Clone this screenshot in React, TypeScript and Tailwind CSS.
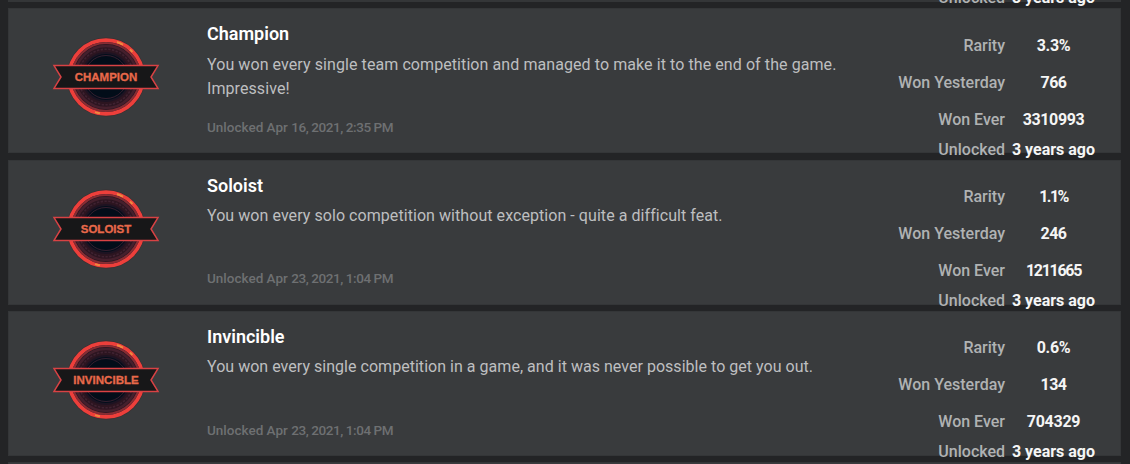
type Badge = {
  title: string;
  ribbon: string;
  ribbonWidth: number;
  lines: string[];
  lineTracking: string;
  date: string;
  dateTracking: string;
  rarity: string;
  rarityTracking: string;
  yesterday: string;
  ever: string;
  everTracking: string;
};

const badges: Badge[] = [
  {
    title: 'Champion',
    ribbon: 'CHAMPION',
    ribbonWidth: 62.5,
    lines: [
      'You won every single team competition and managed to make it to the end of the game.',
      'Impressive!',
    ],
    lineTracking: 'tracking-[0.08px]',
    date: '16, 2021, 2:35 PM',
    dateTracking: 'tracking-[-0.42px]',
    rarity: '3.3%',
    rarityTracking: 'tracking-[-0.3px]',
    yesterday: '766',
    ever: '3310993',
    everTracking: 'tracking-[-0.4px]',
  },
  {
    title: 'Soloist',
    ribbon: 'SOLOIST',
    ribbonWidth: 50.5,
    lines: ['You won every solo competition without exception - quite a difficult feat.'],
    lineTracking: 'tracking-[0.06px]',
    date: '23, 2021, 1:04 PM',
    dateTracking: 'tracking-[-0.42px]',
    rarity: '1.1%',
    rarityTracking: 'tracking-[-1.6px]',
    yesterday: '246',
    ever: '1211665',
    everTracking: 'tracking-[-1.3px]',
  },
  {
    title: 'Invincible',
    ribbon: 'INVINCIBLE',
    ribbonWidth: 65.5,
    lines: ['You won every single competition in a game, and it was never possible to get you out.'],
    lineTracking: 'tracking-[0.03px]',
    date: '23, 2021, 1:04 PM',
    dateTracking: 'tracking-[-0.42px]',
    rarity: '0.6%',
    rarityTracking: 'tracking-[-0.3px]',
    yesterday: '134',
    ever: '704329',
    everTracking: 'tracking-[-0.3px]',
  },
];

function Medal({ label, width }: { label: string; width: number }) {
  return (
    <svg width="110" height="84" viewBox="0 0 110 84" className="block">
      <circle cx="55" cy="42" r="39.5" fill="#3a3032" />
      <circle cx="55" cy="42" r="36.9" fill="#2c1520" stroke="#ed3f3b" strokeWidth="3.8" />
      <circle cx="55" cy="42" r="34" fill="none" stroke="#872d34" strokeWidth="2.2" />
      <circle cx="55" cy="42" r="31" fill="none" stroke="#45202d" strokeWidth="2.6" />
      <circle cx="55" cy="42" r="27.8" fill="none" stroke="#3f2231" strokeWidth="1.6" strokeDasharray="2.4 1.4" />
      <circle cx="55" cy="42" r="24" fill="#030e1b" stroke="#1d1322" strokeWidth="2" />
      <circle cx="55" cy="42" r="21.5" fill="#020d19" stroke="#422334" strokeWidth="0.8" />
      <path d="M66 7 A36.8 36.8 0 0 1 72 9.6 M79 14.6 A36.8 36.8 0 0 1 81.5 17 M91.3 49 A36.8 36.8 0 0 1 90 53.5 M44 77.1 A36.8 36.8 0 0 0 49 78.3" fill="none" stroke="#ee8a3e" strokeWidth="2" />
      <path d="M3 30.6 H107 L100 42 L107 53.4 H3 L10 42 Z" fill="#171718" stroke="#d84244" strokeWidth="1.5" />
      <text
        x="55"
        y="45.6"
        textAnchor="middle"
        textLength={width}
        lengthAdjust="spacingAndGlyphs"
        fill="#e8694a"
        stroke="#e8694a"
        strokeWidth="0.3"
        fontFamily="Liberation Sans, sans-serif"
        fontWeight="700"
        fontSize="11.2"
      >
        {label}
      </text>
    </svg>
  );
}

function Stat({ label, value, tracking = '', last = false }: { label: string; value: string; tracking?: string; last?: boolean }) {
  return (
    <div className={`flex shrink-0 items-start text-[16px] leading-5 whitespace-nowrap ${last ? 'h-5' : 'h-[37px]'}`}>
      <span className="w-[126px] text-right font-medium text-[#b0b2b3]">{label}</span>
      <span className={`w-[97px] text-center font-bold text-[#f5f5f5] ${tracking}`}>{value}</span>
    </div>
  );
}

function BadgeCard({ badge }: { badge: Badge }) {
  return (
    <section className="flex h-[145px] shrink-0 border border-[#343638] bg-[#393b3d]">
      <div className="w-[198px] shrink-0 pt-[26px] pl-[41.5px]">
        <Medal label={badge.ribbon} width={badge.ribbonWidth} />
      </div>
      <div className="flex min-w-0 flex-1 flex-col pt-[13px]">
        <h2 className="text-[18px] leading-6 font-semibold text-white">{badge.title}</h2>
        <div className={`mt-[6.5px] h-12 text-[16px] leading-6 whitespace-nowrap text-[#bebfc0] ${badge.lineTracking}`}>
          {badge.lines.map((line) => (
            <p key={line}>{line}</p>
          ))}
        </div>
        <p className="mt-[16.1px] text-[13.5px] leading-5 font-medium text-[#6e7072]">
          Unlocked Apr <span className={badge.dateTracking}>{badge.date}</span>
        </p>
      </div>
      <div className="mr-[18px] flex w-[223px] shrink-0 flex-col pt-[26.5px]">
        <Stat label="Rarity" value={badge.rarity} tracking={badge.rarityTracking} />
        <Stat label="Won Yesterday" value={badge.yesterday} tracking="tracking-[-0.5px]" />
        <div className="-mb-[7px]">
          <Stat label="Won Ever" value={badge.ever} tracking={badge.everTracking} />
        </div>
        <Stat label="Unlocked" value="3 years ago" last />
      </div>
    </section>
  );
}

export default function App() {
  return (
    <main className="flex h-[464px] w-[1130px] flex-col gap-[6.33px] overflow-hidden bg-[#232426] pr-[9px] pl-[8px] font-['Roboto',sans-serif]">
      <section className="flex h-[2px] shrink-0 items-end justify-end bg-[#343638] pr-[19px]">
        <div className="-mb-[6px]">
          <Stat label="Unlocked" value="3 years ago" last />
        </div>
      </section>
      {badges.map((badge) => (
        <BadgeCard key={badge.title} badge={badge} />
      ))}
      <section className="h-[145px] shrink-0 border border-[#343638] bg-[#393b3d]" />
    </main>
  );
}
